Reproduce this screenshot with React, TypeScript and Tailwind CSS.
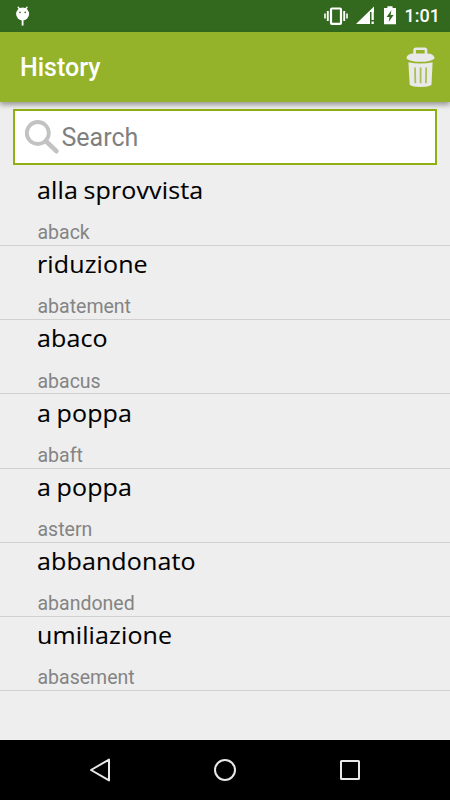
type HistoryEntry = {
    word: string,
    translation: string,
}

const entries: HistoryEntry[] = [
    { word: "alla sprovvista", translation: "aback" },
    { word: "riduzione", translation: "abatement" },
    { word: "abaco", translation: "abacus" },
    { word: "a poppa", translation: "abaft" },
    { word: "a poppa", translation: "astern" },
    { word: "abbandonato", translation: "abandoned" },
    { word: "umiliazione", translation: "abasement" },
];

const StatusBar = () => (
    <div className="flex h-8 shrink-0 items-center justify-between bg-[#33691e] pl-4 pr-[10px] text-white">
        <svg width="14" height="32" viewBox="0 0 14 32" fill="none">
            <path d="M2.2 7.2 4 9.5M11 7.2 9.2 9.5" stroke="#fff" strokeWidth="1.4" strokeLinecap="round" />
            <circle cx="6.6" cy="14" r="6.5" fill="#fff" />
            <circle cx="4" cy="12.4" r="0.8" fill="#33691e" />
            <circle cx="9.2" cy="12.4" r="0.8" fill="#33691e" />
            <path d="M6.6 20v5.6" stroke="#fff" strokeWidth="1.8" />
        </svg>
        <div className="flex items-center">
            <svg width="24" height="32" viewBox="0 0 24 32" fill="none" stroke="#fff">
                <rect x="7" y="8.5" width="10" height="15.4" rx="1" strokeWidth="2.2" />
                <path d="M3.8 11v10M20.2 11v10" strokeWidth="1.9" />
                <path d="M1 13.5v5M23 13.5v5" strokeWidth="1.6" />
            </svg>
            <svg className="ml-2" width="18" height="32" viewBox="0 0 18 32" fill="#fff">
                <path d="M0 24 18 6.5V12h-4v12z" />
                <path d="M15.5 12H17.8v8h-2.3zM15.5 21.6H17.8V24h-2.3z" />
            </svg>
            <svg className="ml-[10px]" width="12" height="32" viewBox="0 0 12 32">
                <path d="M0 8h3.4V6.3h5.2V8H12v16.3H0z" fill="#fff" />
                <path d="M7.4 10.3 2.6 17h2.9l-.8 5 4.9-7H6.6z" fill="#33691e" />
            </svg>
            <span className="ml-[9px] text-[18px] leading-8 font-medium">1:01</span>
        </div>
    </div>
);

const TrashIcon = () => (
    <svg width="30" height="41" viewBox="0 0 30 41" fill="#e9e9e9">
        <path d="M8.6 8V3.3Q8.6 1.8 10 1.8h8.6q1.4 0 1.4 1.5V8" fill="none" stroke="#e9e9e9" strokeWidth="2.6" />
        <path d="M.4 11.4Q.8 6.5 8 6.5h13q7 0 7.6 4.9-4.2 3.4-14.1 3.4T.4 11.4z" />
        <path d="M2.4 15.2q12.1 2.4 24.2 0l-1.1 22.6q-2.8 2.2-10.9 2.2t-10.9-2.2z" />
        <path d="M9 21.2l.3 14.2M14.6 21.2v14.2M20.2 21.2l-.3 14.2" stroke="#a9c158" strokeWidth="1.8" strokeLinecap="round" />
    </svg>
);

const SearchIcon = () => (
    <svg width="36" height="36" viewBox="0 0 36 36" fill="none" stroke="#c2c2c2">
        <circle cx="13.8" cy="14" r="11" strokeWidth="3.8" />
        <path d="M21.8 22 32.4 32.2" strokeWidth="4.6" strokeLinecap="round" />
    </svg>
);

const NavigationBar = () => (
    <div className="flex h-[60px] shrink-0 items-center justify-between bg-black px-[89px]">
        <svg width="22" height="24" viewBox="0 0 22 24" fill="none" stroke="#e8e8e8" strokeWidth="2" strokeLinejoin="round">
            <path d="M2 12 20 1.6v20.8z" />
        </svg>
        <svg width="24" height="24" viewBox="0 0 24 24" fill="none" stroke="#e8e8e8" strokeWidth="2">
            <circle cx="12" cy="12" r="10" />
        </svg>
        <svg width="22" height="24" viewBox="0 0 22 24" fill="none" stroke="#e8e8e8" strokeWidth="2">
            <rect x="2" y="3" width="18" height="18" rx=".5" />
        </svg>
    </div>
);

const App = () => {
    return (
        <div className="flex h-[800px] w-[450px] flex-col overflow-hidden bg-[#eeeeee] font-['Roboto',sans-serif]">
            <StatusBar />
            <header className="relative z-10 flex h-[70px] shrink-0 items-center justify-between bg-[#95b32a] pl-5 pr-[14px] shadow-[0_3px_5px_rgba(0,0,0,0.35)]">
                <h1 className="pt-[2px] text-[25px] font-medium text-white">History</h1>
                <button aria-label="Clear history">
                    <TrashIcon />
                </button>
            </header>
            <main className="flex-1">
                <div className="ml-[12.5px] mr-[13px] mt-[6.5px] flex h-[56.5px] items-center border-[2.5px] border-[#8fb012] bg-white pl-[9px]">
                    <SearchIcon />
                    <span className="ml-[2px] pt-[2px] text-[25px] text-[#7f7f7f]">Search</span>
                </div>
                <ul className="mt-[6.8px]">
                    {entries.map((entry) => (
                        <li key={entry.translation} className="h-[74.2px] border-b border-[#d0d0d0] pl-[37.5px]">
                            <p className="-ml-[0.5px] h-[47.5px] w-fit origin-left scale-x-[1.087] pt-[1.2px] font-['Open_Sans',sans-serif] text-[23px] leading-[34px] tracking-[0.12px] [word-spacing:-1px] [-webkit-text-stroke:0.1px_black] whitespace-nowrap text-black">
                                {entry.word}
                            </p>
                            <p className="text-[19.5px] leading-[28px] text-[#848484]">{entry.translation}</p>
                        </li>
                    ))}
                </ul>
            </main>
            <NavigationBar />
        </div>
    );
};
export default App;
